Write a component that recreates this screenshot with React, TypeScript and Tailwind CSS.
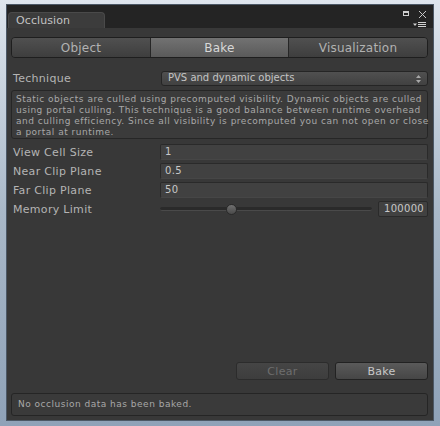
import React from 'react';

const font = "font-['DejaVu_Sans','Verdana',sans-serif]";

function Field({ label, value }: { label: string; value: string }) {
  return (
    <div className="flex items-center h-[16px]">
      <div className="w-[149px] pl-[2px] text-[11px] tracking-[0.3px] text-[#b4b4b4] leading-none">{label}</div>
      <div className="flex-1 h-[16px] bg-[#414141] border border-[#2a2a2a] border-b-[#464646] rounded-[2px] flex items-center pl-[4px] text-[10px] tracking-[0.3px] text-[#c8c8c8] leading-none">
        {value}
      </div>
    </div>
  );
}

export default function App() {
  return (
    <div className={`${font} w-[440px] h-[426px] pt-[5px] px-[7px] pb-[6px] bg-gradient-to-b from-[#dfe6ee] via-[#a9b8c8] to-[#8fa2b8]`}>
      <div className="h-full flex flex-col bg-[#383838] shadow-[0_0_0_1px_#4c5866]">
        {/* tab strip */}
        <div className="relative h-[23px] shrink-0 bg-[#242424] flex items-end">
          <div className="ml-[1px] w-[97px] h-[16px] bg-[#3c3c3c] border border-b-0 border-[#4a4a4a] rounded-t-[4px] pl-[7px] flex items-center text-[11px] tracking-[0.1px] text-[#c2c2c2] leading-none">
            Occlusion
          </div>
          <div className="absolute right-[24px] top-[6px] w-[6px] h-[5px] border border-[#cfcfcf] border-t-2" />
          <svg className="absolute right-[6px] top-[5px]" width="9" height="9" viewBox="0 0 9 9">
            <path d="M1 1 L8 8 M8 1 L1 8" stroke="#c8c8c8" strokeWidth="1" />
          </svg>
          <svg className="absolute right-[6px] top-[17px]" width="14" height="6" viewBox="0 0 14 6">
            <path d="M0 1.5 H4 L2 4 Z" fill="#d0d0d0" />
            <path d="M5 0.5 H13 M5 2.5 H13 M5 4.5 H13" stroke="#d0d0d0" strokeWidth="1" />
          </svg>
        </div>

        {/* content */}
        <div className="flex-1 flex flex-col pl-[4px] pr-[5px] pt-[9px] pb-[4px]">
          {/* toolbar */}
          <div className="flex h-[21px] rounded-[4px] border border-[#1e1e1e] overflow-hidden text-[12px] tracking-[0.2px] leading-none">
            <div className="w-[139px] flex items-center justify-center bg-gradient-to-b from-[#505050] to-[#3e3e3e] text-[#b2b2b2] border-r border-[#262626]">Object</div>
            <div className="w-[138px] flex items-center justify-center bg-gradient-to-b from-[#727272] to-[#5a5a5a] text-[#d8d8d8] border-r border-[#262626]">Bake</div>
            <div className="flex-1 flex items-center justify-center bg-gradient-to-b from-[#505050] to-[#3e3e3e] text-[#b2b2b2]">Visualization</div>
          </div>

          {/* technique */}
          <div className="mt-[13px] flex items-center h-[14px]">
            <div className="w-[150px] pl-[2px] text-[11px] tracking-[0.3px] text-[#b4b4b4] leading-none">Technique</div>
            <div className="relative flex-1 h-[15px] rounded-[3px] border border-[#252525] bg-gradient-to-b from-[#505050] to-[#414141] flex items-center pl-[6px] text-[10px] text-[#c4c4c4] leading-none">
              PVS and dynamic objects
              <svg className="absolute right-[6px] top-[3px]" width="5" height="8" viewBox="0 0 5 8">
                <path d="M0 3 L2.5 0 L5 3 Z M0 5 L2.5 8 L5 5 Z" fill="#a8a8a8" />
              </svg>
            </div>
          </div>

          {/* help box */}
          <div className="mt-[5px] h-[49px] rounded-[3px] border border-[#262626] bg-[#3b3b3b] px-[4px] pt-[3px] text-[9px] leading-[11px] text-[#a8a8a8] tracking-[0.5px] whitespace-nowrap">
            Static objects are culled using precomputed visibility. Dynamic objects are culled<br />
            using portal culling. This technique is a good balance between runtime overhead<br />
            and culling efficiency. Since all visibility is precomputed you can not open or close<br />
            a portal at runtime.
          </div>

          <div className="mt-[5px] flex flex-col gap-[3px]">
            <Field label="View Cell Size" value="1" />
            <Field label="Near Clip Plane" value="0.5" />
            <Field label="Far Clip Plane" value="50" />
            <div className="flex items-center h-[16px]">
              <div className="w-[149px] pl-[2px] text-[11px] tracking-[0.3px] text-[#b4b4b4] leading-none">Memory Limit</div>
              <div className="relative flex-1 h-[16px] flex items-center">
                <div className="w-full h-[4px] rounded-full bg-[#2a2a2a] border-b border-[#4a4a4a]" />
                <div className="absolute left-[66px] top-[3px] w-[11px] h-[11px] rounded-full bg-gradient-to-b from-[#707070] to-[#4a4a4a] border border-[#2a2a2a]" />
              </div>
              <div className="ml-[6px] w-[50px] h-[16px] bg-[#414141] border border-[#2a2a2a] rounded-[2px] flex items-center justify-end pr-[3px] text-[10px] tracking-[0.3px] text-[#c8c8c8] leading-none">
                100000
              </div>
            </div>
          </div>

          <div className="flex-1" />

          {/* buttons */}
          <div className="flex justify-end gap-[6px] h-[18px]">
            <div className="w-[93px] rounded-[3px] border border-[#2c2c2c] bg-gradient-to-b from-[#454545] to-[#3d3d3d] flex items-center justify-center text-[11px] tracking-[0.3px] text-[#6e6e6e] leading-none">Clear</div>
            <div className="w-[93px] rounded-[3px] border border-[#222] bg-gradient-to-b from-[#5a5a5a] to-[#464646] flex items-center justify-center text-[11px] tracking-[0.3px] text-[#c8c8c8] leading-none">Bake</div>
          </div>

          {/* status */}
          <div className="mt-[13px] h-[23px] rounded-[3px] border border-[#252525] bg-[#3a3a3a] flex items-center pl-[6px] text-[9px] tracking-[0.5px] text-[#a8a8a8] leading-none">
            No occlusion data has been baked.
          </div>
        </div>
      </div>
    </div>
  );
}
